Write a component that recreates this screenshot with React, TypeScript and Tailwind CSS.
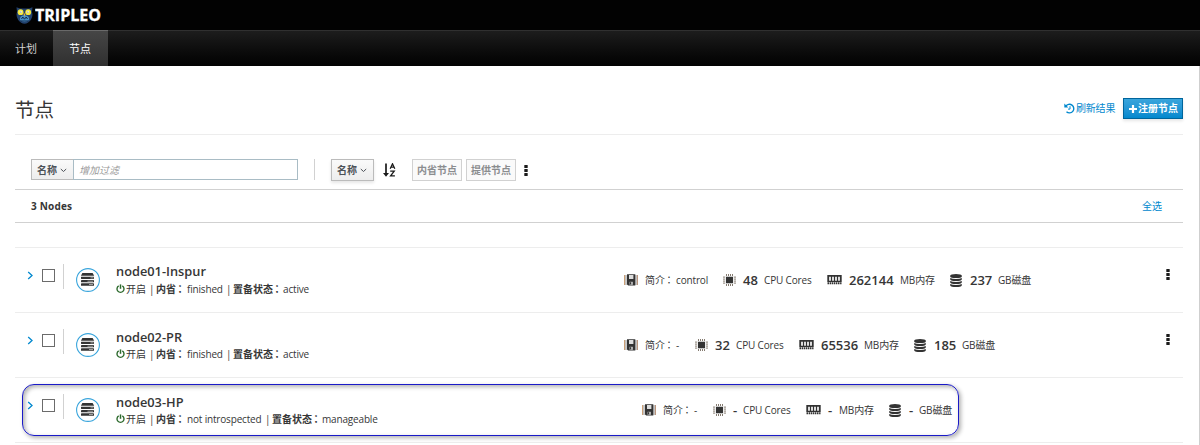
import React from "react";

type IconProps = { className?: string };

const Owl = () => (
  <svg width="17" height="17" viewBox="0 0 17 17" className="block shrink-0">
    <path d="M0.5 0.3 L4 1.6 H13 L16.5 0.3 L16 5 Q17.4 9 14.8 13 Q12 16.7 8.5 16.7 Q5 16.7 2.2 13 Q-0.4 9 1 5Z" fill="#23426e" />
    <path d="M4 13 Q3 9 8.5 8 Q14 9 13 13 Q8.5 17 4 13Z" fill="#4791c8" />
    <path d="M4.5 14h8M5.5 12l1.3-2 1.7 2.2 1.7-2.2 1.3 2" stroke="#14294a" strokeWidth="1" fill="none" />
    <circle cx="4.6" cy="5.2" r="2.9" fill="#f2e63a" />
    <circle cx="12.2" cy="5.2" r="2.9" fill="#f2e63a" />
    <circle cx="4.9" cy="5" r="1.3" fill="#fffef0" />
    <circle cx="11.9" cy="5" r="1.3" fill="#fffef0" />
    <circle cx="4.9" cy="5" r="0.6" fill="#3a3a16" />
    <circle cx="11.9" cy="5" r="0.6" fill="#3a3a16" />
    <path d="M7.3 6.5h2.2l-1.1 3z" fill="#f2b632" />
  </svg>
);

const Chevron = ({ className }: IconProps) => (
  <svg width="7" height="5" viewBox="0 0 7 5" className={className}>
    <path d="M0.8 1 L3.5 3.5 L6.2 1" fill="none" stroke="#4d5258" strokeWidth="1" />
  </svg>
);

const Kebab = () => (
  <svg width="4" height="11" viewBox="0 0 4 11" className="block" fill="#1b1b1b">
    <rect x="0.3" y="0" width="3.4" height="3" rx="0.5" />
    <rect x="0.3" y="4" width="3.4" height="3" rx="0.5" />
    <rect x="0.3" y="8" width="3.4" height="3" rx="0.5" />
  </svg>
);

const History = () => (
  <svg width="11" height="11" viewBox="0 0 11 11" className="block shrink-0" fill="none" stroke="#0088ce">
    <path d="M1.8 3.4 A4.3 4.3 0 1 1 2.5 8.7" strokeWidth="1.4" />
    <path d="M0.3 0.5v4h4z" fill="#0088ce" stroke="none" />
    <path d="M6 3.2v2.9H4" strokeWidth="1" />
  </svg>
);

const SortIcon = () => (
  <svg width="13" height="15" viewBox="0 0 13 15" className="block" fill="none" stroke="#1b1b1b">
    <path d="M3 0.5v11" strokeWidth="1.7" />
    <path d="M0 10h6L3 13.8z" fill="#1b1b1b" stroke="none" />
    <path d="M7.2 5.8L9.5 0.8 11.8 5.8M7.9 4.2h3.2" strokeWidth="1.3" />
    <path d="M7.2 8.2h4L7.6 12.8h4.3" strokeWidth="1.3" />
  </svg>
);

const Power = () => (
  <svg width="9" height="10" viewBox="0 0 9 10" className="block shrink-0" fill="none" stroke="#2d6a2d">
    <path d="M2.7 1.9A3.5 3.5 0 1 0 6.3 1.9" strokeWidth="1.4" />
    <path d="M4.5 0.4v4.4" strokeWidth="1.5" />
  </svg>
);

const ServerBadge = () => (
  <svg width="24" height="24" viewBox="0 0 24 24" className="block shrink-0">
    <circle cx="12" cy="12" r="11.4" fill="#fff" stroke="#39a5dc" strokeWidth="1.1" />
    <g fill="#333">
      <path d="M6.4 5h10.2l1.6 2.8H4.9z" />
      <rect x="5" y="8.7" width="13" height="2.3" rx="0.4" />
      <rect x="5" y="12" width="13" height="2.3" rx="0.4" />
      <rect x="5" y="15.3" width="13" height="2.5" rx="0.4" />
    </g>
    <path d="M14.5 9.9h3M11.5 13.2h5.5M13 16.5h4" stroke="#bdbdbd" strokeWidth="0.8" />
  </svg>
);

const ProfileIcon = () => (
  <svg width="14" height="12" viewBox="0 0 14 12" className="block shrink-0">
    <path d="M0.6 1v10" stroke="#c08a58" strokeWidth="0.9" />
    <path d="M13.4 1v10" stroke="#a87a5c" strokeWidth="0.9" />
    <path d="M2 1v10M12 1v10" stroke="#666" strokeWidth="0.7" />
    <path d="M3 0.2h8.3v11.4H4.2L3 10.4z" fill="#333" />
    <rect x="5" y="1" width="4.4" height="4" fill="#ddd" />
    <rect x="5.6" y="7.8" width="3.2" height="3" fill="#ccc" />
    <rect x="6" y="8.2" width="1.2" height="2.2" fill="#333" />
  </svg>
);

const CpuIcon = () => (
  <svg width="13" height="12" viewBox="0 0 13 12" className="block shrink-0">
    <path d="M3.5 0v12M5.5 0v12M7.5 0v12M9.5 0v12M0 3.1h13M0 5.1h13M0 7.1h13M0 9.1h13" stroke="#776c60" strokeWidth="0.9" />
    <rect x="2" y="2" width="9" height="8" fill="#eee" />
    <rect x="3" y="2.8" width="7" height="6.4" fill="#333" />
  </svg>
);

const MemoryIcon = () => (
  <svg width="15" height="10" viewBox="0 0 15 10" className="block shrink-0">
    <path d="M0.3 0h14.4v7H0.3z" fill="#333" />
    <path d="M2 1.8h2v4H2zM5 1.8h2v4H5zM8 1.8h2v4H8zM11 1.8h2v4h-2z" fill="#ddd" />
    <path d="M0.5 8.2h14" stroke="#333" strokeWidth="1.9" strokeDasharray="1.5 0.6" />
  </svg>
);

const DiskIcon = () => (
  <svg width="12" height="13" viewBox="0 0 12 13" className="block shrink-0" fill="#333">
    <path d="M0.2 1.7Q0.4 0 6 0t5.8 1.7v1Q11.6 4 6 4T0.2 2.7z" />
    <path d="M0.2 4Q2 5 6 5t5.8-1v1.4Q11 7 6 7T0.2 5.4z" />
    <path d="M0.2 7Q2 8 6 8t5.8-1v1.4Q11 10 6 10T0.2 8.4z" />
    <path d="M0.2 10Q2 11 6 11t5.8-1v1.4Q11 13 6 13T0.2 11.4z" />
  </svg>
);

const Colon = () => <span className="-ml-px font-['Noto_Sans_CJK_TC',sans-serif]">：</span>;

type NodeInfo = {
  name: string;
  namePad: string;
  intro: string;
  introWidth: string;
  state: string;
  profile: string;
  profileWidth: string;
  cpu: string;
  cpuWidth: string;
  memory: string;
  memoryWidth: string;
  disk: string;
  diskWidth: string;
  statsOffset: string;
  menu: boolean;
};

const nodes: NodeInfo[] = [
  {
    name: "node01-Inspur", namePad: "pt-[14px]", intro: "finished", introWidth: "w-[39px]", state: "active",
    profile: "control", profileWidth: "w-[32px]", cpu: "48", cpuWidth: "w-[21px]",
    memory: "262144", memoryWidth: "w-[51px]", disk: "237", diskWidth: "w-[28px]",
    statsOffset: "", menu: true,
  },
  {
    name: "node02-PR", namePad: "pt-[15px]", intro: "finished", introWidth: "w-[39px]", state: "active",
    profile: "-", profileWidth: "w-[4px]", cpu: "32", cpuWidth: "w-[21px]",
    memory: "65536", memoryWidth: "w-[43px]", disk: "185", diskWidth: "w-[28px]",
    statsOffset: "", menu: true,
  },
  {
    name: "node03-HP", namePad: "pt-[15px]", intro: "not introspected", introWidth: "w-[78px]", state: "manageable",
    profile: "-", profileWidth: "w-[4px]", cpu: "-", cpuWidth: "w-[10px]",
    memory: "-", memoryWidth: "w-[11px]", disk: "-", diskWidth: "w-[10px]",
    statsOffset: "ml-[18px]", menu: false,
  },
];

const NodeRow = ({ node }: { node: NodeInfo }) => (
  <div className="flex h-[65px] border-t border-[#ededed]">
    <div className="flex pl-[12px] pt-[15px]">
      <svg width="7" height="9" viewBox="0 0 7 9" className="mt-[8px] block">
        <path d="M1.2 1 L5 4.5 L1.2 8" fill="none" stroke="#0088ce" strokeWidth="1.3" />
      </svg>
      <div className="ml-[8px] mt-[6px] h-[13px] w-[13px] border border-[#6b6b6b] bg-white" />
      <div className="ml-[8px] mt-px h-[25px] w-px bg-[#d1d1d1]" />
      <div className="ml-[12px] mt-[5px]"><ServerBadge /></div>
    </div>
    <div className="ml-[16px] w-[508px]">
      <div className={`h-[33px] text-[12.8px] leading-[18px] font-semibold ${node.namePad}`}>{node.name}</div>
      <div className="flex h-[16px] items-center text-[10px] leading-[16px] tracking-[-0.17px]">
        <Power />
        <span className="ml-px w-[23px] tracking-normal">开启</span>
        <span className="w-[7px]">|</span>
        <b className="w-[31px] tracking-normal">内省<Colon /></b>
        <span className={node.introWidth}>{node.intro}</span>
        <span className="w-[7px]">|</span>
        <b className="w-[50px] tracking-normal">置备状态<Colon /></b>
        <span>{node.state}</span>
      </div>
    </div>
    <div className={`mt-[24px] flex h-[16px] items-center text-[10px] leading-[16px] ${node.statsOffset}`}>
      <ProfileIcon />
      <span className="ml-[7px] w-[31px]">简介<Colon /></span>
      <span className={`tracking-[-0.15px] ${node.profileWidth}`}>{node.profile}</span>
      <span className="ml-[15px]"><CpuIcon /></span>
      <span className={`ml-[7px] text-[13px] font-semibold ${node.cpuWidth}`}>{node.cpu}</span>
      <span className="w-[48px] tracking-[-0.15px]">CPU Cores</span>
      <span className="ml-[15px]"><MemoryIcon /></span>
      <span className={`ml-[7px] text-[13px] font-semibold ${node.memoryWidth}`}>{node.memory}</span>
      <span className="w-[35px] tracking-[-0.15px]">MB内存</span>
      <span className="ml-[15px]"><DiskIcon /></span>
      <span className={`ml-[8px] text-[13px] font-semibold ${node.diskWidth}`}>{node.disk}</span>
      <span className="tracking-[-0.15px]">GB磁盘</span>
    </div>
    {node.menu && <div className="ml-auto mr-[13px] mt-[21px]"><Kebab /></div>}
  </div>
);

export default function App() {
  return (
    <div className="relative h-[445px] w-[1200px] overflow-hidden whitespace-nowrap bg-white font-['Open_Sans','Noto_Sans_CJK_SC',sans-serif] text-[10px] text-[#363636]">
      <header className="flex h-[30px] items-center bg-[#020202] pl-[16px] text-white">
        <Owl />
        <svg width="70" height="26" viewBox="0 0 70 26" className="ml-[2px] block">
          <text x="0" y="19" fontSize="15.8" fontWeight="700" textLength="66" lengthAdjust="spacingAndGlyphs" fill="#fff" stroke="#fff" strokeWidth="0.3" fontFamily="Open Sans">TRIPLEO</text>
        </svg>
      </header>
      <nav className="flex h-[36px] border-t border-[#303030] bg-linear-to-b from-[#1d1d1d] to-[#030303] text-[11px] leading-[35px]">
        <div className="w-[53px] pl-[15px] text-[#d1d1d1]">计划</div>
        <div className="-mt-px w-[55px] border-t border-[#6a6a6a] bg-linear-to-b from-[#464646] to-[#303030] pl-[16px] text-white">节点</div>
      </nav>
      <div className="h-[379px] border-r border-[#cfcfcf] pl-[15px] pr-[16px]">
        <div className="flex h-[69px] items-center border-b border-[#ededed] pt-[17px]">
          <h1 className="pt-[2px] text-[19.5px] leading-[26px]">节点</h1>
          <div className="ml-auto flex items-center text-[#0088ce]">
            <History />
            <span className="ml-px w-[47px] tracking-[-0.2px]">刷新结果</span>
          </div>
          <button className="flex h-[21px] w-[60px] items-center border border-[#00659c] bg-linear-to-b from-[#39a5dc] to-[#0088ce] pl-[5px] font-semibold text-white shadow-[0_2px_3px_rgba(3,3,3,0.1)]">
            <svg width="8" height="8" viewBox="0 0 8 8" className="mr-px shrink-0"><path d="M4 0v8M0 4h8" stroke="#fff" strokeWidth="2.2" /></svg>
            注册节点
          </button>
        </div>
        <div className="flex h-[55px] border-b border-[#d1d1d1] pl-[16px] pt-[24px]">
          <button className="flex h-[21px] w-[43px] items-center border border-[#bbb] bg-linear-to-b from-[#fafafa] to-[#ededed] pl-[5px] pt-px font-semibold text-[#4d5258]">
            名称<Chevron className="ml-[3px]" />
          </button>
          <div className="-ml-px h-[21px] w-[225px] border border-[#a9bcc5] bg-white pl-[5px] leading-[20px] text-[#999] italic">增加过滤</div>
          <div className="ml-[16px] h-[21px] w-px bg-[#d1d1d1]" />
          <button className="ml-[16px] flex h-[22px] w-[43px] items-center border border-[#bbb] bg-linear-to-b from-[#fafafa] to-[#ededed] pl-[5px] font-semibold text-[#4d5258] shadow-[0_2px_3px_rgba(3,3,3,0.1)]">
            名称<Chevron className="ml-[3px]" />
          </button>
          <div className="ml-[9px] mt-[4px]"><SortIcon /></div>
          <button className="ml-[16px] flex h-[22px] w-[50px] items-center justify-center border border-[#d1d1d1] bg-[#fafafa] font-semibold text-[#8b8d8f]">内省节点</button>
          <button className="ml-[4px] flex h-[22px] w-[50px] items-center justify-center border border-[#d1d1d1] bg-[#fafafa] font-semibold text-[#8b8d8f]">提供节点</button>
          <div className="ml-[8px] mt-[6px]"><Kebab /></div>
        </div>
        <div className="flex h-[33px] items-center border-b border-[#d1d1d1] pl-[16px] pr-[21px]">
          <b className="tracking-[0.2px]">3 Nodes</b>
          <span className="ml-auto pt-px text-[#0088ce]">全选</span>
        </div>
        <div className="mt-[24px] border-b border-[#ededed]">
          {nodes.map((node) => <NodeRow key={node.name} node={node} />)}
        </div>
      </div>
      <div className="pointer-events-none absolute left-[22px] top-[384px] h-[52px] w-[937px] rounded-[12px] border-[1.5px] border-[#1a1ac8] shadow-[2px_2px_4px_rgba(0,0,0,0.3),inset_2px_2px_4px_rgba(0,0,0,0.3)]" />
    </div>
  );
}
